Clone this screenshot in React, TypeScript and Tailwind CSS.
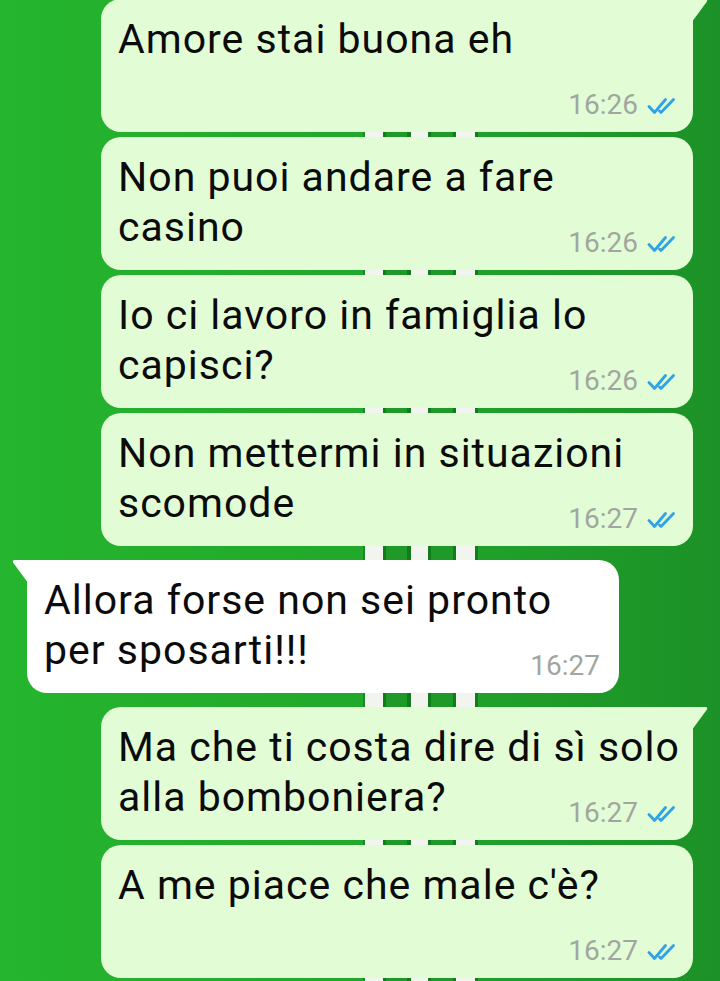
import React from "react";

type Msg = {
  lines: string[];
  time: string;
  out: boolean;
  tail?: boolean;
  gap: string;
};

const msgs: Msg[] = [
  { lines: ["Amore stai buona eh"], time: "16:26", out: true, tail: true, gap: "-mt-[1px]" },
  { lines: ["Non puoi andare a fare", "casino"], time: "16:26", out: true, gap: "mt-[5px]" },
  { lines: ["Io ci lavoro in famiglia lo", "capisci?"], time: "16:26", out: true, gap: "mt-[5px]" },
  { lines: ["Non mettermi in situazioni", "scomode"], time: "16:27", out: true, gap: "mt-[5px]" },
  { lines: ["Allora forse non sei pronto", "per sposarti!!!"], time: "16:27", out: false, tail: true, gap: "mt-[14px]" },
  { lines: ["Ma che ti costa dire di sì solo", "alla bomboniera?"], time: "16:27", out: true, tail: true, gap: "mt-[14px]" },
  { lines: ["A me piace che male c'è?"], time: "16:27", out: true, gap: "mt-[5px]" },
];

function Checks() {
  return (
    <svg width="31" height="16" viewBox="0 0 31 16" className="ml-[9px] mt-[2px]" fill="none">
      <path d="M2 8.5 L7.5 14.5 L18.5 1.5" stroke="#2fa3ea" strokeWidth="2.8" strokeLinecap="round" strokeLinejoin="round" />
      <path d="M12.5 13 L14 14.5 L26.5 1.5" stroke="#2fa3ea" strokeWidth="2.8" strokeLinecap="round" strokeLinejoin="round" />
    </svg>
  );
}

function Bubble({ m }: { m: Msg }) {
  const base = "relative w-[592px] h-[133px] pt-[15px] pl-[17px] shrink-0";
  const side = m.out ? "ml-[101px] bg-[#e2fdd5]" : "ml-[27px] bg-white";
  const radius = m.tail
    ? m.out
      ? "rounded-tl-[20px] rounded-bl-[20px] rounded-br-[20px]"
      : "rounded-tr-[20px] rounded-bl-[20px] rounded-br-[20px]"
    : "rounded-[20px]";
  return (
    <div className={`${base} ${side} ${radius} ${m.gap}`}>
      {m.tail && m.out && (
        <svg className="absolute left-full top-0" width="15" height="22" viewBox="0 0 15 22">
          <path d="M0 0 H12 Q15.5 0 13.6 3 L0 21.5 Z" fill="#e2fdd5" />
        </svg>
      )}
      {m.tail && !m.out && (
        <svg className="absolute right-full top-0" width="15" height="22" viewBox="0 0 15 22">
          <path d="M15 0 H3 Q-0.5 0 1.4 3 L15 21.5 Z" fill="#ffffff" />
        </svg>
      )}
      <div className="h-[100px] text-[41px] leading-[50px] tracking-[1px] text-[#0b0b0b] whitespace-nowrap font-['Roboto',sans-serif]">
        {m.lines.map((l, i) => (
          <div key={i}>{l}</div>
        ))}
      </div>
      <div
        className={`-mt-[23px] flex justify-end items-center h-[28px] text-[28px] leading-[28px] text-[#a2a6a0] font-['Roboto',sans-serif] ${
          m.out ? "pr-[15px]" : "pr-[19px]"
        }`}
      >
        <span>{m.time}</span>
        {m.out && <Checks />}
      </div>
    </div>
  );
}

export default function App() {
  return (
    <div className="w-full h-[981px] overflow-hidden flex flex-col bg-[linear-gradient(90deg,transparent_0_363px,#1a8a22_363px_365px,#f1f4ef_365px_383px,#137b1b_383px_386px,#1f9a28_386px_407px,#137b1b_407px_411px,#f1f4ef_411px_428px,#137b1b_428px_431px,#1f9a28_431px_453px,#137b1b_453px_456px,#f1f4ef_456px_475px,#137b1b_475px_478px,transparent_478px),linear-gradient(90deg,#25b52e,#22a82b_50%,#1c9127)]">
      {msgs.map((m, i) => (
        <Bubble key={i} m={m} />
      ))}
    </div>
  );
}
